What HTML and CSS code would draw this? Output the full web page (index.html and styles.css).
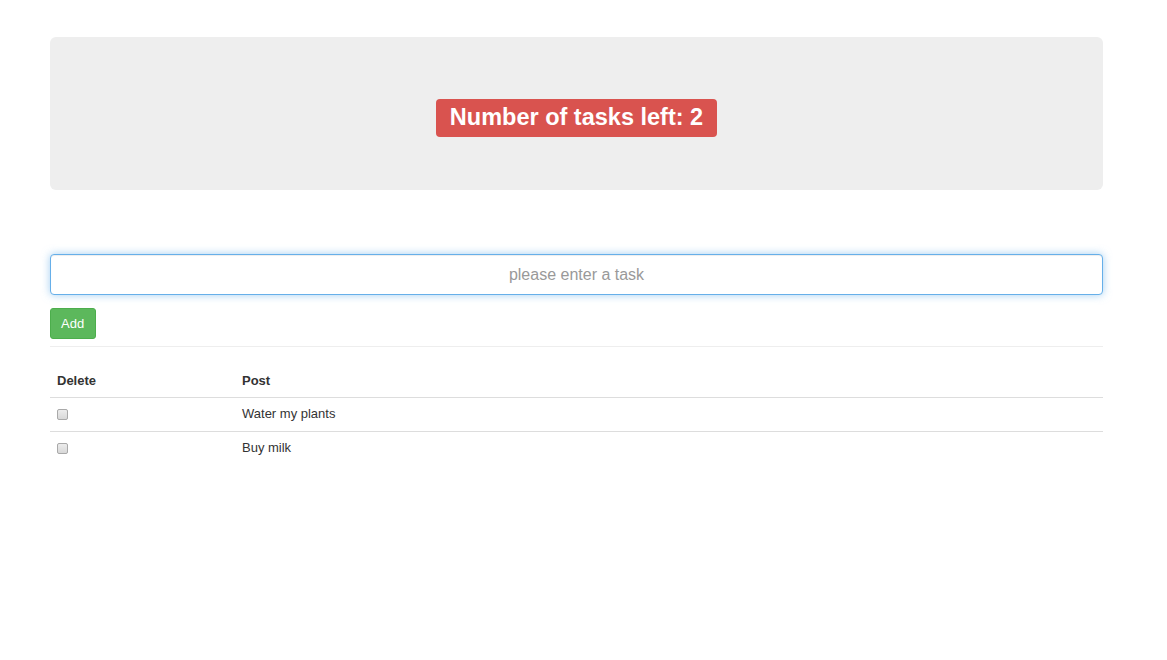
FILE: index.html
```html
<!DOCTYPE html>
<html>
<head>
<meta charset="utf-8">
<link rel="stylesheet" href="styles.css">
</head>
<body>
<div class="page">
  <div class="jumbotron">
    <span class="label">Number of tasks left: 2</span>
  </div>
  <form class="task-form">
    <input class="task-input" type="text" placeholder="please enter a task" autofocus>
    <div class="actions"><button type="button" class="btn-add">Add</button></div>
  </form>
  <hr class="divider">
  <table class="tasks">
    <thead>
      <tr><th class="col-del">Delete</th><th>Post</th></tr>
    </thead>
    <tbody>
      <tr><td class="col-del"><input type="checkbox" class="chk"></td><td>Water my plants</td></tr>
      <tr><td class="col-del"><input type="checkbox" class="chk"></td><td>Buy milk</td></tr>
    </tbody>
  </table>
</div>
</body>
</html>
```

FILE: styles.css
```css
* { box-sizing: border-box; }
html, body { margin: 0; padding: 0; background: #fff; }
body {
  font-family: "Liberation Sans", Arial, Helvetica, sans-serif;
  color: #333;
  font-size: 13px;
}
.page {
  padding: 37px 64px 0 50px;
}
.jumbotron {
  background: #eee;
  border-radius: 6px;
  height: 153px;
  display: flex;
  align-items: center;
  justify-content: center;
  padding-top: 9px;
}
.label {
  display: inline-block;
  background: #d9534f;
  color: #fff;
  font-weight: bold;
  font-size: 23.5px;
  line-height: 24px;
  padding: 6px 14px 8px;
  border-radius: 4px;
}
.task-form {
  margin-top: 64px;
}
.task-input {
  display: block;
  width: 100%;
  height: 41px;
  border: 1px solid #66afe9;
  border-radius: 4px;
  box-shadow: inset 0 1px 1px rgba(0,0,0,.075), 0 0 8px rgba(102,175,233,.6);
  outline: none;
  font-family: inherit;
  font-size: 16px;
  text-align: center;
  color: #555;
  padding: 6px 12px;
}
.task-input::placeholder { color: #999; }
.actions { margin-top: 13px; }
.btn-add {
  background: #5cb85c;
  border: 1px solid #4cae4c;
  color: #fff;
  border-radius: 3px;
  font-family: inherit;
  font-size: 13px;
  line-height: 18px;
  height: 31px;
  padding: 5px 11px 5px 10px;
  cursor: pointer;
}
.divider {
  border: 0;
  border-top: 1px solid #eee;
  margin: 7px 0 0;
}
.tasks {
  width: 100%;
  border-collapse: collapse;
  margin-top: 16px;
}
.tasks th, .tasks td {
  text-align: left;
  padding: 7px 7px 9px;
  line-height: 17px;
  vertical-align: middle;
}
.tasks th {
  font-weight: bold;
  line-height: 18px;
  padding: 9px 7px 7px;
  border-bottom: 1px solid #ddd;
}
.tasks td { border-top: 1px solid #ddd; }
.tasks tbody tr:first-child td { border-top: 0; }
.col-del { width: 185px; }
.chk {
  -webkit-appearance: none;
  appearance: none;
  display: block;
  margin: 1px 0 0;
  width: 11px;
  height: 11px;
  border: 1px solid #a9a9a9;
  border-radius: 2px;
  background: linear-gradient(#ececec, #d8d8d8);
}
```
